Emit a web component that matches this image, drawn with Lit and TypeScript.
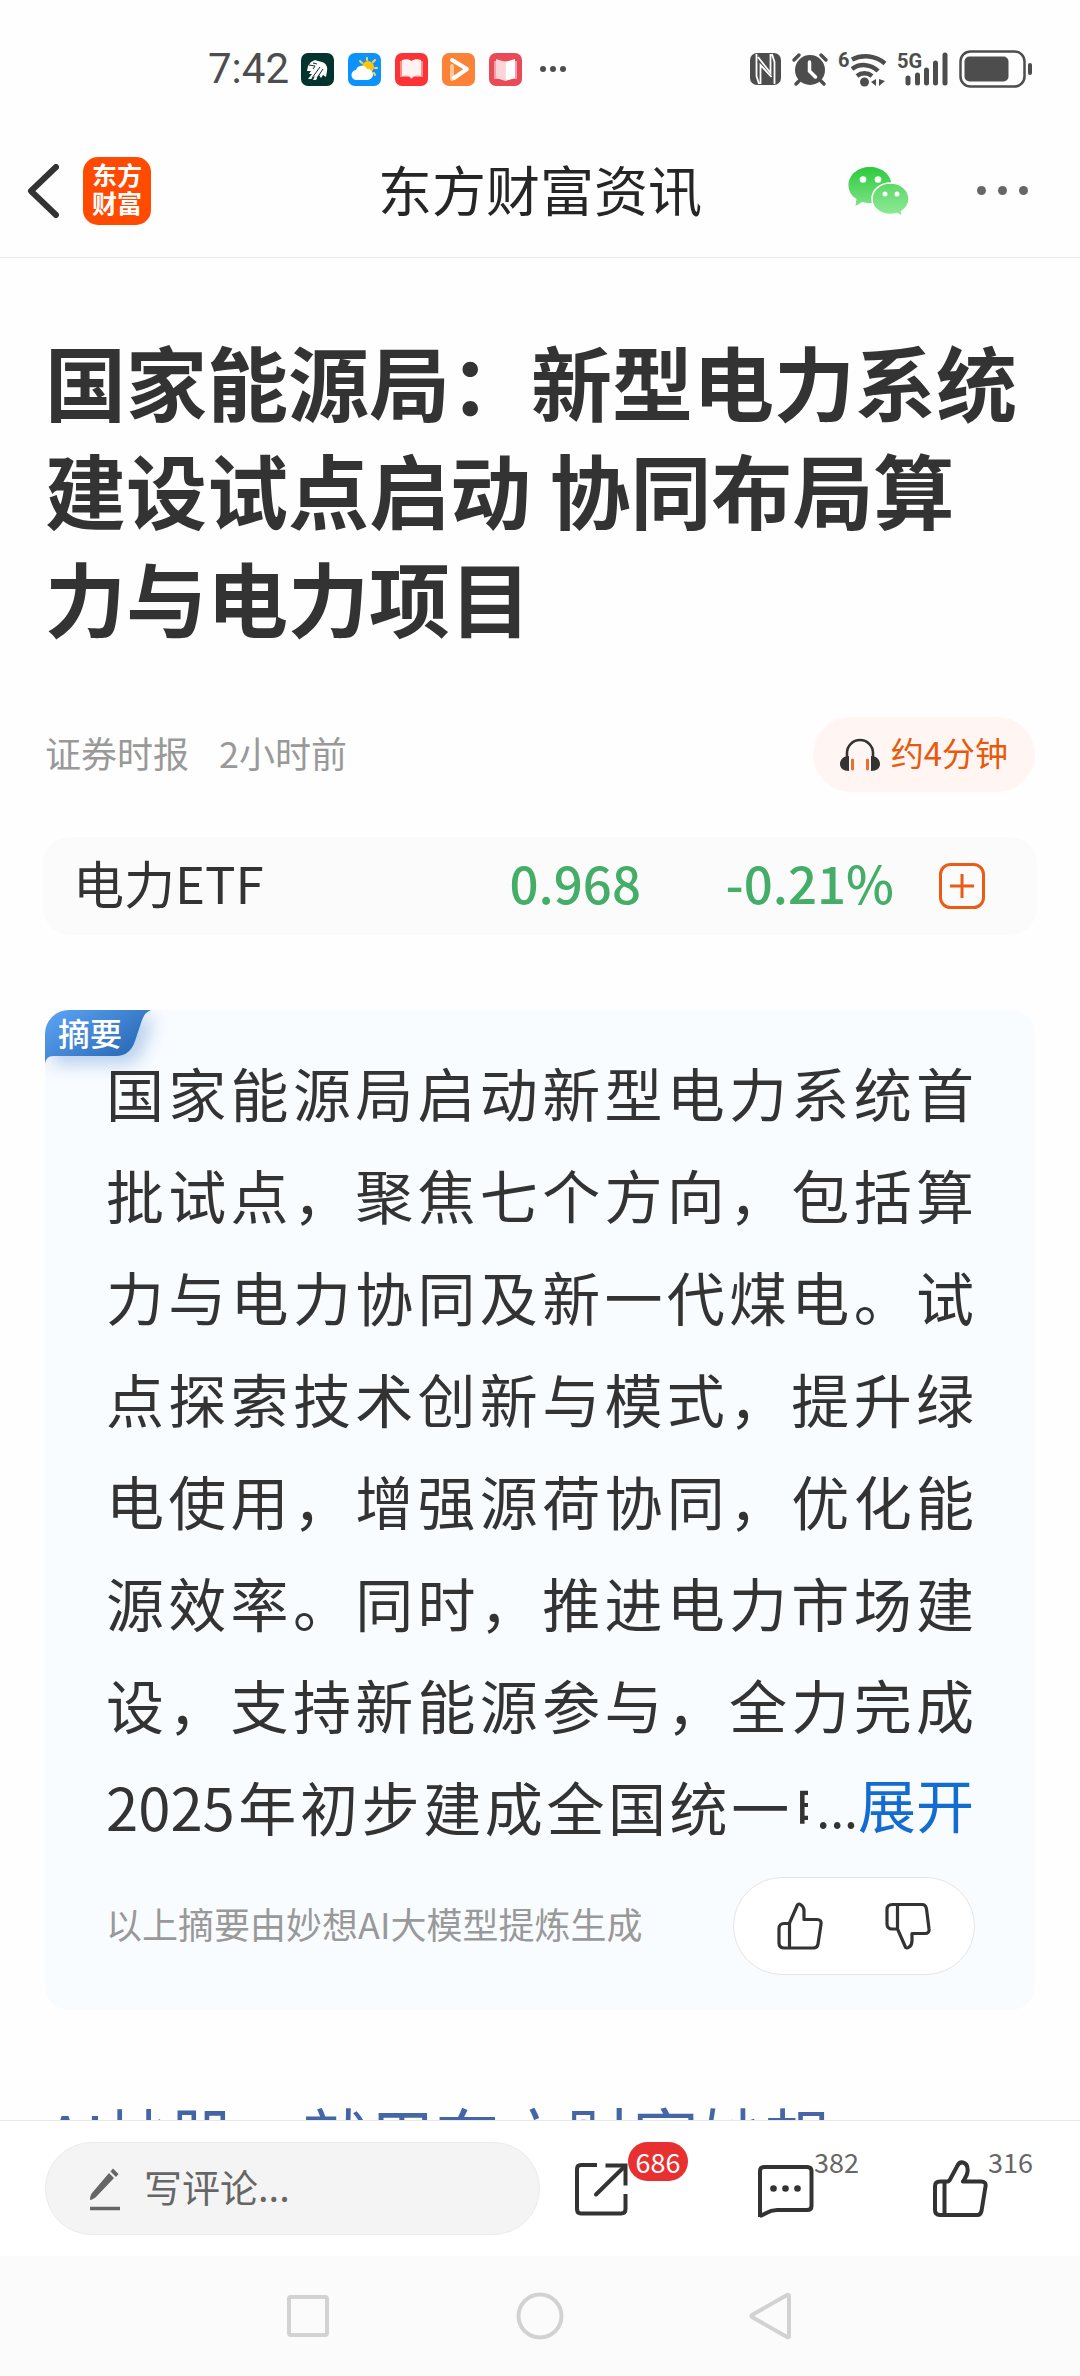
import { LitElement, html, css, svg } from "lit";
import { customElement } from "lit/decorators.js";

const dots = (r: number, step: number) =>
  [0, 1, 2].map((i) => svg`<circle cx=${r + i * step} cy=${r} r=${r} fill="currentColor" />`);

@customElement("status-bar")
class StatusBar extends LitElement {
  static styles = css`
    :host {
      display: flex;
      align-items: center;
      justify-content: space-between;
      height: 124px;
      padding: 14px 47px 0 208px;
      box-sizing: border-box;
      color: #4d4d4d;
    }
    svg {
      display: block;
      overflow: visible;
    }
    .left {
      display: flex;
      align-items: center;
      gap: 14px;
    }
    .right {
      display: flex;
      align-items: center;
      gap: 11px;
    }
    .time {
      font: 400 42px/48px Roboto, sans-serif;
      margin-right: -2px;
    }
    .more {
      margin-left: 4px;
    }
    .small {
      font: 700 20px Roboto, sans-serif;
    }
  `;

  render() {
    return html`
      <div class="left">
        <span class="time">7:42</span>
        <svg width="33" height="33" viewBox="0 0 33 33">
          <rect width="33" height="33" rx="7" fill="#02332d" />
          <path d="M7 13l3-4 4-2 3 1 4 1c4 1 6 5 5 9l-1 6-3-2-2 3-2-3-3 5-3 0 2-4-4 3-3 0 4-5-3 0 2-3-4 0z" fill="#fff" />
          <path d="M8 12l6 1-2 3M19 14l-8 11M22 16l-6 9M12 10l4 1" stroke="#02332d" stroke-width="1" fill="none" />
        </svg>
        <svg width="33" height="33" viewBox="0 0 33 33">
          <rect width="33" height="33" rx="7" fill="#0d92fb" />
          <path d="M19 5v2M12 8l2 2M27 7l-2 2M29 15h-2M27 22l-1-2" stroke="#ffd34a" stroke-width="2" stroke-linecap="round" />
          <circle cx="20" cy="14" r="6" fill="#fdc50c" />
          <path d="M9 27a5 5 0 0 1-1-10 6 6 0 0 1 11-1 5 5 0 0 1 1 11z" fill="#fff" />
        </svg>
        <svg width="33" height="33" viewBox="0 0 33 33">
          <rect width="33" height="33" rx="7" fill="#fb3236" />
          <path d="M5 8h23v16h-9l-2.500 2-2.500-2H5z" fill="#fb8d8c" />
          <path d="M7 7c4-1 7-1 9.500 1C19 6 23 6 26 7v16c-4-1-7-1-9.500 2-2.500-3-5.500-3-9.500-2z" fill="#fff3f1" />
        </svg>
        <svg width="33" height="33" viewBox="0 0 33 33">
          <rect width="33" height="33" rx="7" fill="#fb8237" />
          <path d="M10 13v13l4-2" fill="none" stroke="#ffc89c" stroke-width="4" stroke-linecap="round" stroke-linejoin="round" />
          <path d="M10 7l15 9-13 9" fill="none" stroke="#fff" stroke-width="4" stroke-linecap="round" stroke-linejoin="round" />
        </svg>
        <svg width="33" height="33" viewBox="0 0 33 33">
          <rect width="33" height="33" rx="7" fill="#e94a57" />
          <path d="M5 8h23v18H5z" fill="#f4a0a6" />
          <path d="M7 6l9.500 3v19L7 25z" fill="#fbd5d8" />
          <path d="M26 6l-9.500 3v19L26 25z" fill="#fff" />
        </svg>
        <svg class="more" width="27" height="6" viewBox="0 0 27 6">${dots(3, 10)}</svg>
      </div>
      <div class="right">
        <svg width="31" height="32" viewBox="0 0 31 32">
          <rect width="31" height="32" rx="7" fill="currentColor" />
          <path d="M6.500 1v22l2.500 8M10.500 31V12l11 12M24.500 31V9L22 1M20.500 1v19L8 4" fill="none" stroke="#fff" stroke-width="1.800" />
        </svg>
        <svg width="36" height="34" viewBox="0 0 36 34">
          <circle cx="18" cy="18" r="15" fill="currentColor" />
          <path d="M2 8l5-5M34 8l-5-5M4 32l5-5M32 32l-5-5" stroke="currentColor" stroke-width="3.500" stroke-linecap="round" />
          <path d="M17.500 10v9l6 6" fill="none" stroke="#fff" stroke-width="3.500" stroke-linecap="round" />
        </svg>
        <svg width="48" height="36" viewBox="0 0 48 36">
          <text class="small" x="-1" y="16" fill="currentColor">6</text>
          <path d="M13 8.500a30 30 0 0 1 33 4M13 18a20 20 0 0 1 26 2M18 25a12 12 0 0 1 15 0" fill="none" stroke="currentColor" stroke-width="4.500" />
          <circle cx="25.500" cy="31" r="4.500" fill="currentColor" />
          <path d="M37 28v7l-5-4zM40 28l6 2-6 5z" fill="currentColor" />
        </svg>
        <svg width="50" height="36" viewBox="0 0 50 36">
          <text class="small" x="-1" y="17" fill="currentColor">5G</text>
          <path d="M10 27v5M19.500 24v8M28.500 19v13M37.500 12v20M47 4v28" stroke="currentColor" stroke-width="5" stroke-linecap="round" />
        </svg>
        <svg width="74" height="38" viewBox="0 0 74 38">
          <rect x="1.500" y="1.500" width="64" height="35" rx="10" fill="none" stroke="currentColor" stroke-width="2.500" />
          <rect x="5.500" y="6.500" width="44" height="25" rx="5" fill="currentColor" />
          <rect x="69" y="13" width="4" height="12" rx="2" fill="currentColor" />
        </svg>
      </div>
    `;
  }
}

@customElement("page-header")
class PageHeader extends LitElement {
  static styles = css`
    :host {
      display: grid;
      grid-template-columns: 1fr auto 1fr;
      align-items: center;
      height: 134px;
      box-sizing: border-box;
      border-bottom: 1px solid #ebebeb;
      padding: 0 27px;
    }
    svg {
      display: block;
    }
    button {
      border: 0;
      padding: 0;
      background: none;
      color: #333;
    }
    .left {
      display: flex;
      align-items: center;
      gap: 24px;
    }
    .right {
      display: flex;
      align-items: center;
      justify-content: flex-end;
      gap: 67px;
      padding-right: 25px;
    }
    .right button {
      color: #666;
    }
    .logo {
      width: 68px;
      height: 68px;
      padding-top: 3px;
      box-sizing: border-box;
      border-radius: 15px;
      background: #ff4a00;
      color: #fff;
      text-align: center;
      text-decoration: none;
      font: 700 25px/28px "Noto Sans CJK SC", sans-serif;
    }
    .logo span {
      display: block;
    }
    .name {
      margin: 0;
      padding-bottom: 4px;
      font-size: 54px;
      line-height: 80px;
      font-weight: 400;
      color: #262626;
    }
  `;

  render() {
    return html`
      <div class="left">
        <button aria-label="返回">
          <svg width="32" height="54" viewBox="0 0 32 54">
            <path d="M29 3L4 27l25 24" fill="none" stroke="currentColor" stroke-width="6" stroke-linecap="round" stroke-linejoin="round" />
          </svg>
        </button>
        <a class="logo" href="#"><span>东方</span><span>财富</span></a>
      </div>
      <h2 class="name">东方财富资讯</h2>
      <div class="right">
        <button aria-label="微信">
          <svg width="62" height="50" viewBox="0 0 62 50">
            <defs>
              <linearGradient id="big" x1="0" y1="0" x2="0" y2="1">
                <stop offset="0" stop-color="#2ccb3c" />
                <stop offset="1" stop-color="#7ce286" />
              </linearGradient>
              <linearGradient id="little" x1="0" y1="0" x2="0" y2="1">
                <stop offset="0" stop-color="#5cd868" />
                <stop offset="1" stop-color="#90ea98" />
              </linearGradient>
            </defs>
            <path d="M22 1C9.500 1 .500 9 .500 19.500c0 5.500 3 10.500 8 13.500L7.500 40l6.500-4c3 .800 5.500 1 8 1 12.500 0 21.500-8 21.500-18S34 1 22 1z" fill="url(#big)" />
            <path d="M42.500 17c-10.500 0-18.500 7-18.500 16s8 15.500 18.500 15.500c2.500 0 4.500-.300 6.500-1l5.500 3-1-5c4.500-3 7.500-7.500 7.500-12.500 0-9-8-16-18.500-16z" fill="url(#little)" stroke="#fff" stroke-width="1.500" />
            <g fill="#fff">
              <circle cx="15" cy="13.500" r="3.300" />
              <circle cx="30" cy="13.500" r="3.300" />
              <circle cx="37" cy="28" r="2.500" />
              <circle cx="49" cy="28" r="2.500" />
            </g>
          </svg>
        </button>
        <button aria-label="更多">
          <svg width="51" height="9" viewBox="0 0 51 9">${dots(4.5, 21)}</svg>
        </button>
      </div>
    `;
  }
}

@customElement("summary-card")
class SummaryCard extends LitElement {
  static styles = css`
    :host {
      display: block;
      position: relative;
      overflow: hidden;
      margin-top: 75px;
      padding: 31px 61px 35px;
      border-radius: 24px;
      background: #f9fcff;
    }
    svg {
      display: block;
    }
    button {
      border: 0;
      padding: 0;
      background: none;
      color: #333;
      font: inherit;
    }
    .badge {
      position: absolute;
      left: 0;
      top: 0;
    }
    .shape {
      filter: drop-shadow(8px 8px 9px rgba(60, 120, 200, 0.35));
    }
    .tag {
      position: absolute;
      left: 13px;
      top: 0;
      color: #fff;
      font-size: 32px;
      line-height: 44px;
      font-weight: 500;
      white-space: nowrap;
    }
    .body {
      position: relative;
    }
    .text {
      margin: 0;
      color: #333;
      font-size: 58px;
      line-height: 102px;
      text-align: justify;
      text-align-last: justify;
    }
    .tail {
      position: absolute;
      right: 0;
      bottom: 0;
      padding-left: 8px;
      background: #f9fcff;
      color: #333;
      font-size: 50px;
      line-height: 102px;
      white-space: nowrap;
    }
    .tail button {
      color: #146bd0;
      font-size: 58px;
    }
    .foot {
      display: flex;
      align-items: center;
      justify-content: space-between;
      margin-top: 20px;
    }
    .note {
      padding-bottom: 6px;
      color: #999;
      font-size: 36px;
      line-height: 54px;
      white-space: nowrap;
    }
    .votes {
      display: flex;
      align-items: center;
      justify-content: center;
      gap: 62px;
      width: 242px;
      height: 98px;
      margin-right: -1px;
      box-sizing: border-box;
      border: 1px solid #e4e4e4;
      border-radius: 49px;
      background: #fff;
    }
  `;

  render() {
    return html`
      <div class="badge">
        <svg class="shape" width="106" height="54" viewBox="0 0 106 54">
          <defs>
            <linearGradient id="blue" x1="0" y1="0" x2="1" y2="0.700">
              <stop offset="0" stop-color="#5da6f6" />
              <stop offset="1" stop-color="#2766b2" />
            </linearGradient>
          </defs>
          <path d="M0 0H106Q100 2 97 10L90 31Q85 46 71 46H8Q1 46 0 54z" fill="url(#blue)" />
        </svg>
        <span class="tag">摘要</span>
      </div>
      <div class="body">
        <p class="text">国家能源局启动新型电力系统首批试点，聚焦七个方向，包括算力与电力协同及新一代煤电。试点探索技术创新与模式，提升绿电使用，增强源荷协同，优化能源效率。同时，推进电力市场建设，支持新能源参与，全力完成2025年初步建成全国统一电力市</p>
        <span class="tail">...<button>展开</button></span>
      </div>
      <div class="foot">
        <span class="note">以上摘要由妙想AI大模型提炼生成</span>
        <div class="votes">
          <button aria-label="赞">
            <svg width="46" height="48" viewBox="0 0 46 48">
              <path d="M12.500 21L20 4c.500-2 2-2.500 3.500-1.500C26 4 27 6 27 9v8.500h13c3 0 4.500 2 4 4.500l-3 20c-.500 3-2 4-4.500 4H7.500C4 46 2 44 2 41V26.500c0-3 2-5 5-5h5.500V46" fill="none" stroke="currentColor" stroke-width="3.200" stroke-linejoin="round" />
            </svg>
          </button>
          <button aria-label="踩">
            <svg width="46" height="48" viewBox="0 0 46 48">
              <path d="M12.500 27L20 44c.500 2 2 2.500 3.500 1.500C26 44 27 42 27 39v-7.500h13c3 0 4.500-2 4-4.500L41.500 7c-.500-3-2-4.500-4.500-4.500H7.500C4 2.500 2 4.500 2 7.500v14.500c0 3 2 5 5 5h5.500V2.500" fill="none" stroke="currentColor" stroke-width="3.200" stroke-linejoin="round" />
            </svg>
          </button>
        </div>
      </div>
    `;
  }
}

@customElement("comment-bar")
class CommentBar extends LitElement {
  static styles = css`
    :host {
      display: flex;
      align-items: center;
      gap: 35px;
      height: 136px;
      box-sizing: border-box;
      padding: 0 42px 0 45px;
      border-top: 1px solid #e9e9e9;
      background: #fff;
    }
    svg {
      display: block;
    }
    .field {
      flex: 1;
      min-width: 0;
      display: flex;
      align-items: center;
      gap: 22px;
      height: 93px;
      box-sizing: border-box;
      padding: 0 42px;
      border: 1px solid #ebebeb;
      border-radius: 47px;
      background: #f4f4f4;
      color: #666;
    }
    input {
      flex: 1;
      min-width: 0;
      border: 0;
      padding: 0 0 6px;
      outline: 0;
      background: none;
      font: inherit;
      font-size: 38px;
      line-height: 58px;
      color: #666;
    }
    input::placeholder {
      color: #666;
      opacity: 1;
    }
    .actions {
      display: flex;
      gap: 69px;
    }
    button {
      display: flex;
      align-items: center;
      height: 93px;
      border: 0;
      padding: 0;
      background: none;
      color: #333;
    }
    .count {
      align-self: flex-start;
      min-width: 50px;
      box-sizing: border-box;
      text-align: left;
      font: 400 27px/39px "Noto Sans CJK SC", sans-serif;
      color: #666;
    }
    .hot {
      min-width: 60px;
      text-align: center;
      border-radius: 20px;
      background: #e83030;
      color: #fff;
    }
  `;

  render() {
    return html`
      <label class="field">
        <svg width="34" height="44" viewBox="0 0 34 44">
          <path d="M2 33c0-3 .500-5 2-7L21 6l5 5L9 29c-2 2-4 3.500-7 4zM22.500 4.500L25 1.500l5.500 5.500-2.500 3z" fill="currentColor" />
          <path d="M2 41.500h30" stroke="currentColor" stroke-width="3.500" />
        </svg>
        <input type="text" placeholder="写评论..." aria-label="写评论" />
      </label>
      <div class="actions">
        <button aria-label="分享">
          <svg width="53" height="54" viewBox="0 0 53 54">
            <path d="M22 3H6Q2 3 2 7V47Q2 51.500 6 51.500H46Q50.500 51.500 50.500 47V32M30.500 3.500H50.500V23.500" fill="none" stroke="currentColor" stroke-width="4" />
            <path d="M21 32.500L49 5" stroke="currentColor" stroke-width="4" stroke-linecap="round" />
          </svg>
          <span class="count hot">686</span>
        </button>
        <button aria-label="评论">
          <svg width="57" height="58" viewBox="0 0 57 58">
            <path d="M3 57V11Q3 7 7 7H50Q54.500 7 54.500 11V46Q54.500 50 50 50H20C11 50 9 54 3 56" fill="none" stroke="currentColor" stroke-width="4" stroke-linejoin="round" />
            <g fill="currentColor">
              <circle cx="16.500" cy="28.500" r="3.300" />
              <circle cx="28.500" cy="28.500" r="3.300" />
              <circle cx="40.500" cy="28.500" r="3.300" />
            </g>
          </svg>
          <span class="count">382</span>
        </button>
        <button aria-label="点赞">
          <svg width="55" height="58" viewBox="0 0 55 58">
            <path d="M11.500 21.500H14q2 0 3-2L24 6.500c1.500-3.500 3.500-4.500 6-4 4 1 5 5 4.500 9.500-.300 4-3 6.500-4.500 9.500H48q5.500 0 4.500 5L48.500 51q-1 4-4 4H7q-5 0-5-5V26q0-4.500 5-4.500H11.500V55" fill="none" stroke="currentColor" stroke-width="4" stroke-linejoin="round" />
          </svg>
          <span class="count">316</span>
        </button>
      </div>
    `;
  }
}

@customElement("system-nav")
class SystemNav extends LitElement {
  static styles = css`
    :host {
      display: flex;
      align-items: center;
      justify-content: center;
      gap: 184px;
      height: 120px;
      background: #fbfbfb;
    }
    button {
      border: 0;
      padding: 0;
      background: none;
      color: #d2d2d2;
    }
    svg {
      display: block;
    }
  `;

  render() {
    return html`
      <button aria-label="最近任务">
        <svg width="48" height="48" viewBox="0 0 48 48">
          <rect x="5" y="5" width="38" height="38" rx="2" fill="none" stroke="currentColor" stroke-width="4" />
        </svg>
      </button>
      <button aria-label="主屏幕">
        <svg width="48" height="48" viewBox="0 0 48 48">
          <circle cx="24" cy="24" r="21.500" fill="none" stroke="currentColor" stroke-width="4" />
        </svg>
      </button>
      <button aria-label="后退">
        <svg width="48" height="48" viewBox="0 0 48 48">
          <path d="M39 3Q41 2 41 4V44Q41 46 39 45L4 25Q3 24 4 23z" fill="none" stroke="currentColor" stroke-width="4" stroke-linejoin="round" />
        </svg>
      </button>
    `;
  }
}

@customElement("app-root")
class AppRoot extends LitElement {
  static styles = css`
    :host {
      display: flex;
      flex-direction: column;
      height: 100vh;
      background: #fefefe;
      color: #333;
      font-family: "Noto Sans CJK SC", sans-serif;
    }
    .article {
      flex: 1;
      min-height: 0;
      overflow: hidden;
      padding: 68px 45px 0;
    }
    .title {
      margin: 0;
      padding-right: 12px;
      font-size: 81px;
      line-height: 108px;
      font-weight: 700;
    }
    .meta {
      display: flex;
      align-items: center;
      gap: 30px;
      height: 75px;
      margin-top: 67px;
      font-size: 36px;
      line-height: 54px;
      color: #999;
    }
    .meta span {
      padding-bottom: 6px;
    }
    .listen {
      display: flex;
      align-items: center;
      gap: 11px;
      height: 75px;
      margin-left: auto;
      padding: 0 27px;
      border: 0;
      border-radius: 38px;
      background: #fff6f3;
      color: #e8590c;
      font: inherit;
      font-size: 33px;
    }
    svg {
      display: block;
    }
    .quote {
      display: flex;
      align-items: center;
      height: 98px;
      margin: 45px -2px 0;
      padding: 0 52px 0 30px;
      box-sizing: border-box;
      border-radius: 27px;
      background: #fbfbfb;
      font-size: 51px;
      line-height: 74px;
    }
    .quote span {
      padding-bottom: 8px;
    }
    .fund {
      flex: 1;
    }
    .figure {
      color: #44ad67;
      font-weight: 500;
      text-align: right;
    }
    .change {
      width: 253px;
    }
    .add {
      margin-left: 45px;
      padding: 0;
      border: 0;
      background: none;
      color: #ea5c15;
    }
    .promo {
      display: block;
      margin-top: 74px;
      color: #4466a5;
      font-size: 66px;
      line-height: 102px;
      text-decoration: none;
      white-space: nowrap;
    }
  `;

  render() {
    return html`
      <status-bar></status-bar>
      <page-header></page-header>
      <main class="article">
        <h1 class="title">国家能源局：新型电力系统建设试点启动 协同布局算力与电力项目</h1>
        <div class="meta">
          <span>证券时报</span>
          <span>2小时前</span>
          <button class="listen">
            <svg width="40" height="34" viewBox="0 0 40 34">
              <path d="M7 20V15a13 13 0 0 1 26 0V20" fill="none" stroke="#333" stroke-width="2.600" />
              <path d="M9 18v15C3 33 0 30 0 26c0-4 3-7 6-7.500zM31 18v15c6 0 9-3 9-7 0-4-3-7-6-7.500z" fill="#333" />
              <path d="M12.500 22v9M27.500 22v9" stroke="#e8702f" stroke-width="3" stroke-linecap="round" />
            </svg>
            <span>约4分钟</span>
          </button>
        </div>
        <section class="quote">
          <span class="fund">电力ETF</span>
          <span class="figure">0.968</span>
          <span class="figure change">-0.21%</span>
          <button class="add" aria-label="添加自选">
            <svg width="46" height="46" viewBox="0 0 46 46">
              <rect x="1.500" y="1.500" width="43" height="43" rx="10" fill="none" stroke="currentColor" stroke-width="3" />
              <path d="M11 23h24M23 11v24" stroke="currentColor" stroke-width="3" />
            </svg>
          </button>
        </section>
        <summary-card></summary-card>
        <a class="promo" href="#">AI炒股，就用东方财富妙想</a>
      </main>
      <comment-bar></comment-bar>
      <system-nav></system-nav>
    `;
  }
}
